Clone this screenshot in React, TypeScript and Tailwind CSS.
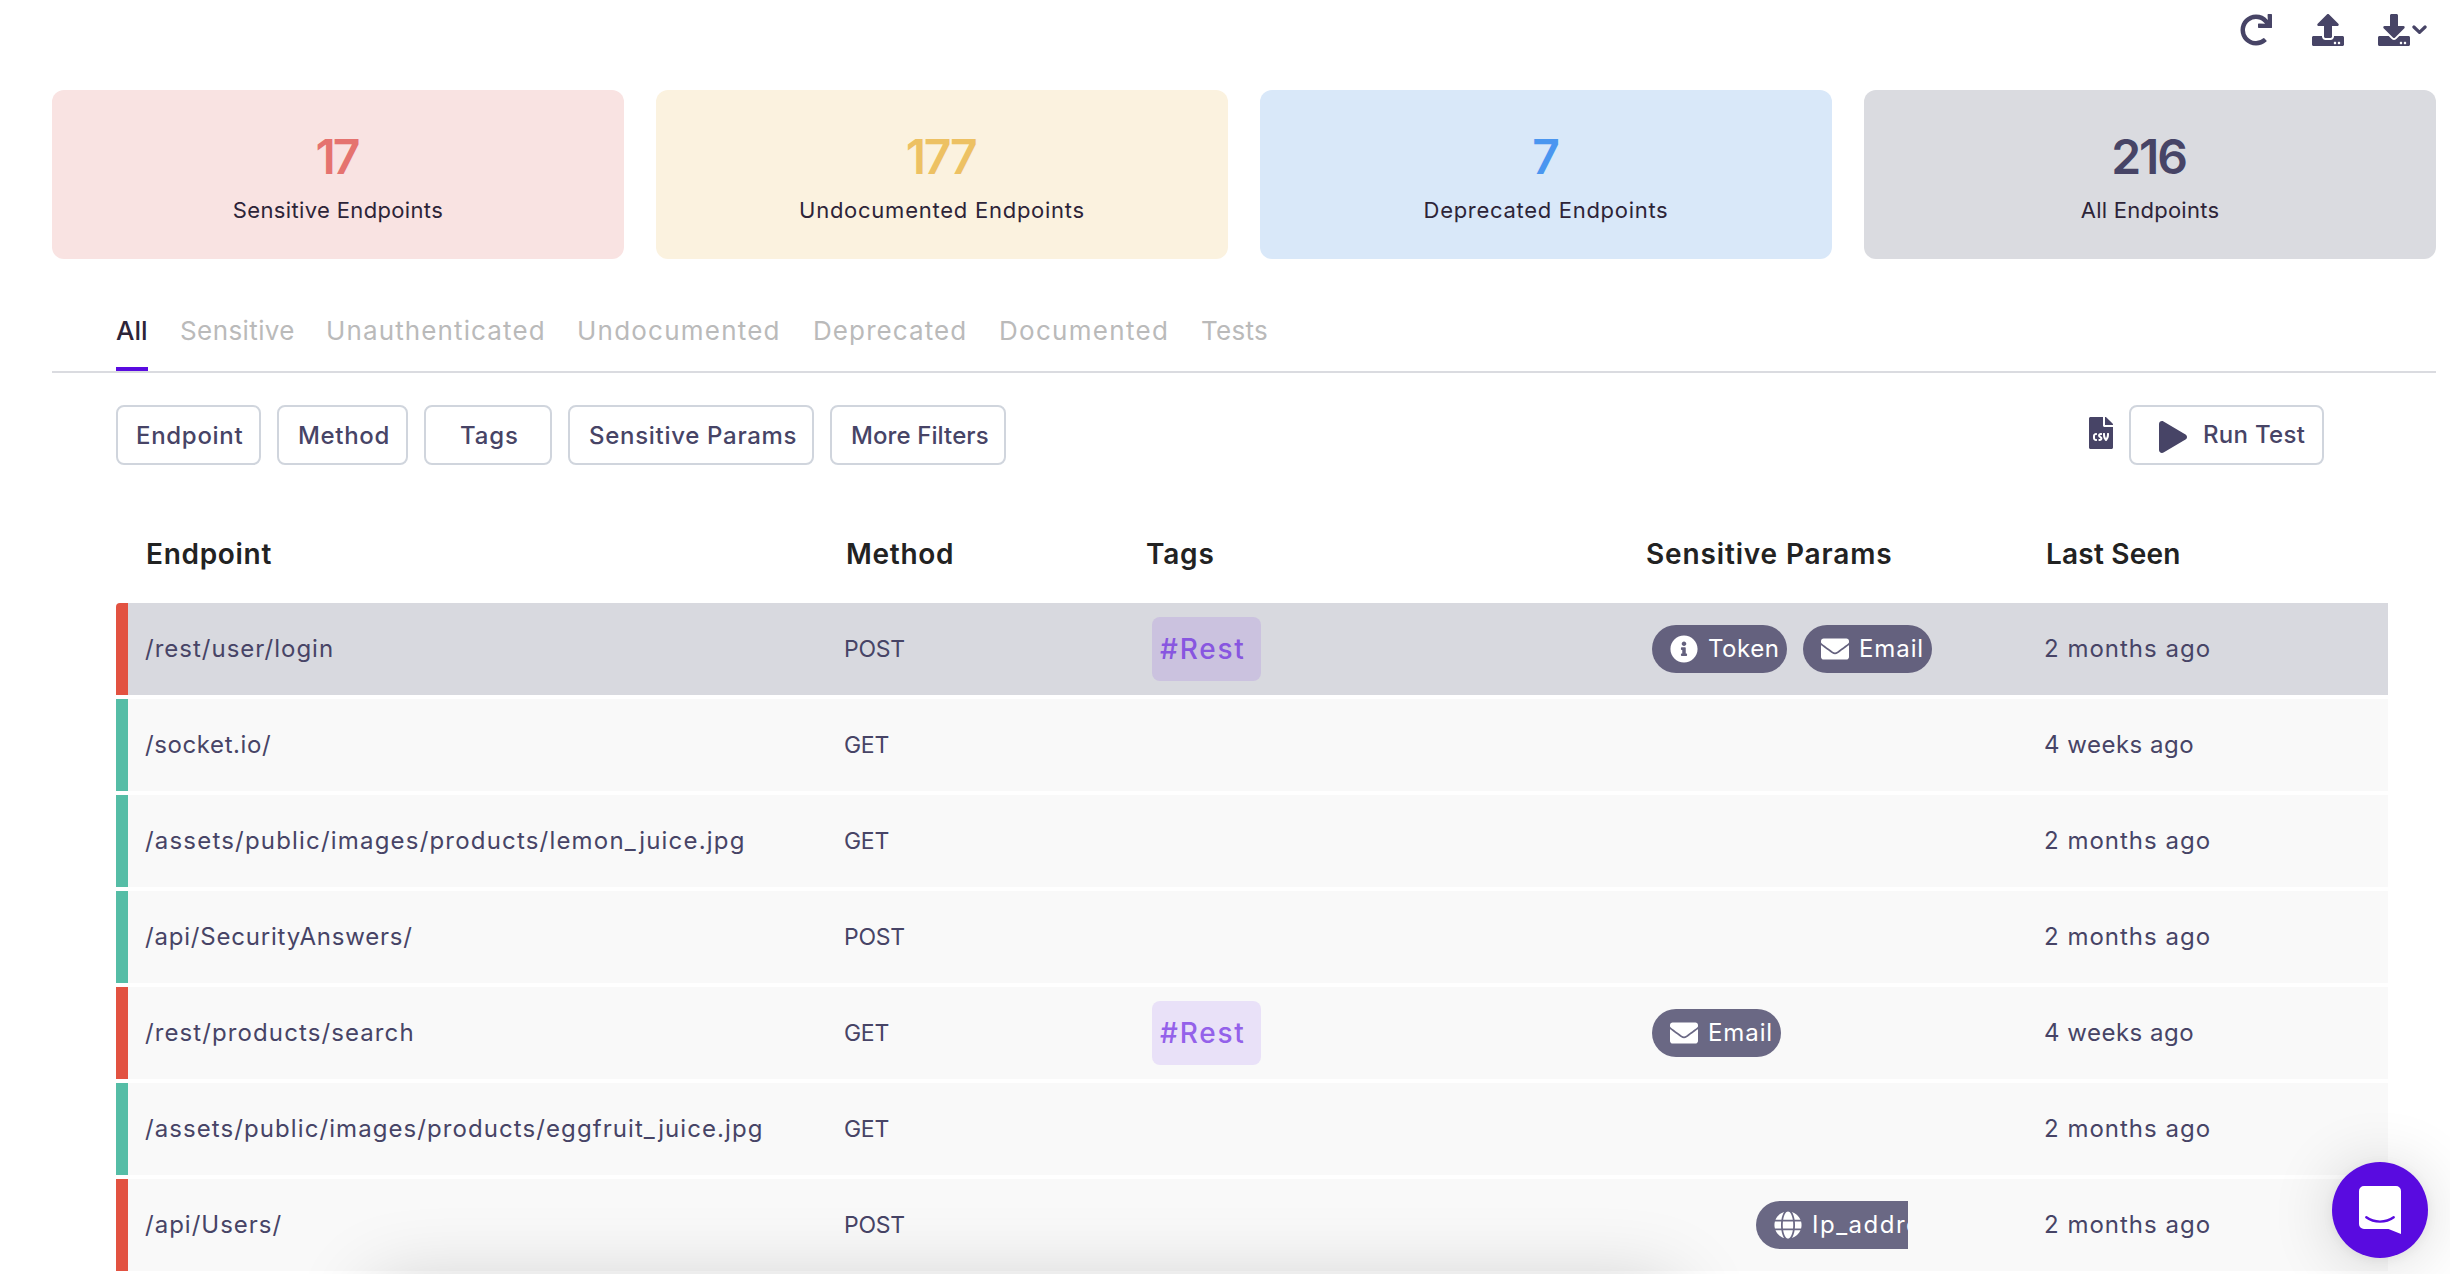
import React from 'react';
import {
  FaRedo,
  FaUpload,
  FaDownload,
  FaFileCsv,
  FaPlay,
  FaInfoCircle,
  FaEnvelope,
  FaGlobe,
} from 'react-icons/fa';

const cards = [
  { value: '17', label: 'Sensitive Endpoints', box: 'bg-[#f9e3e2]', num: 'mr-[3px] text-[#e5736f] tracking-[-3px]', text: 'tracking-[0.35px]' },
  { value: '177', label: 'Undocumented Endpoints', box: 'bg-[#fbf2df]', num: 'mr-[3px] text-[#edc163] tracking-[-2.4px]', text: 'tracking-[0.75px]' },
  { value: '7', label: 'Deprecated Endpoints', box: 'bg-[#d9e8f9]', num: 'text-[#4b96f0]', text: 'tracking-[0.7px]' },
  { value: '216', label: 'All Endpoints', box: 'bg-[#dadbe0]', num: 'mr-[3px] text-[#474466] tracking-[-2.1px]', text: 'tracking-[0.25px]' },
];

const tabs = [
  { label: 'Sensitive', style: 'w-[114px] tracking-[0.4px]' },
  { label: 'Unauthenticated', style: 'w-[219px] tracking-[1.12px]' },
  { label: 'Undocumented', style: 'w-[204px] tracking-[1.22px]' },
  { label: 'Deprecated', style: 'w-[154px] tracking-[1.1px]' },
  { label: 'Documented', style: 'w-[170px] tracking-[1.3px]' },
  { label: 'Tests', style: 'w-[68px] tracking-[0.3px]' },
];

const filters = [
  { label: 'Endpoint', style: 'w-[145px] pl-[18px] tracking-[0.7px]' },
  { label: 'Method', style: 'w-[131px] pl-[19px] tracking-[0.66px]' },
  { label: 'Tags', style: 'w-[128px] pl-[34px] tracking-[0.9px]' },
  { label: 'Sensitive Params', style: 'w-[246px] pl-[19px] tracking-[0.7px]' },
  { label: 'More Filters', style: 'w-[176px] pl-[19px] tracking-[0.1px]' },
];

type Param = 'Token' | 'Email' | 'Ip_address';

interface Row {
  path: string;
  track: string;
  method: 'GET' | 'POST';
  risky?: boolean;
  active?: boolean;
  rest?: boolean;
  params?: Param[];
  shifted?: boolean;
  seen: '2 months ago' | '4 weeks ago';
}

const rows: Row[] = [
  { path: '/rest/user/login', track: 'tracking-[1px]', method: 'POST', risky: true, active: true, rest: true, params: ['Token', 'Email'], seen: '2 months ago' },
  { path: '/socket.io/', track: 'tracking-[0.6px]', method: 'GET', seen: '4 weeks ago' },
  { path: '/assets/public/images/products/lemon_juice.jpg', track: 'tracking-[1.19px]', method: 'GET', seen: '2 months ago' },
  { path: '/api/SecurityAnswers/', track: 'tracking-[0.8px]', method: 'POST', seen: '2 months ago' },
  { path: '/rest/products/search', track: 'tracking-[1.1px]', method: 'GET', risky: true, rest: true, params: ['Email'], seen: '4 weeks ago' },
  { path: '/assets/public/images/products/eggfruit_juice.jpg', track: 'tracking-[1.08px]', method: 'GET', seen: '2 months ago' },
  { path: '/api/Users/', track: 'tracking-[1px]', method: 'POST', risky: true, params: ['Ip_address'], shifted: true, seen: '2 months ago' },
];

const pillStyle: Record<Param, string> = {
  Token: 'w-[135px] tracking-[0.5px]',
  Email: 'w-[129px] tracking-[0.9px]',
  Ip_address: 'w-[210px] tracking-[1.5px]',
};

function Pill({ kind, active }: { kind: Param; active?: boolean }) {
  const Icon = kind === 'Token' ? FaInfoCircle : kind === 'Email' ? FaEnvelope : FaGlobe;
  return (
    <span
      className={`flex h-12 shrink-0 items-center gap-[10px] rounded-full pl-[18px] text-[24px] whitespace-nowrap text-white ${active ? 'bg-[#64617e]' : 'bg-[#6a6884]'} ${pillStyle[kind]}`}
    >
      <Icon className="h-7 w-7 shrink-0" />
      {kind}
    </span>
  );
}

function TableRow({ row }: { row: Row }) {
  return (
    <div
      className={`grid h-[92px] grid-cols-[716px_308px_500px_392px_1fr] items-center border-l-12 text-[24px] text-[#474466] ${row.risky ? 'border-[#e25241]' : 'border-[#55bda6]'} ${row.active ? 'rounded-tl-[4px] bg-[#d8d9df]' : 'bg-[#f9f9f9]'}`}
    >
      <span className={`pl-[17px] whitespace-nowrap ${row.track}`}>{row.path}</span>
      <span className="text-[23px] tracking-[-0.3px]">{row.method}</span>
      <span className="flex">
        {row.rest && (
          <span
            className={`flex h-16 w-[109px] items-center rounded-lg pl-[8px] text-[28px] font-medium tracking-[1.8px] ${row.active ? 'bg-[#cbc2df] text-[#8856e0]' : 'bg-[#e9e1f8] text-[#9461ea]'}`}
          >
            #Rest
          </span>
        )}
      </span>
      <span className={`flex gap-4 overflow-hidden ${row.shifted ? 'pl-[104px]' : ''} ${row.active ? 'w-[290px]' : 'w-64'}`}>
        {row.params?.map((p) => <Pill key={p} kind={p} active={row.active} />)}
      </span>
      <span className={row.seen === '2 months ago' ? 'tracking-[1px]' : 'tracking-[0.5px]'}>{row.seen}</span>
    </div>
  );
}

export default function App() {
  return (
    <div className="relative h-[1274px] w-[2450px] overflow-hidden bg-white pr-[14px] pl-[52px] font-['Inter',sans-serif]">
      {/* Page actions */}
      <header className="flex h-[90px] items-start justify-end pt-[14px] pr-[9px] text-[#474466]">
        <FaRedo className="mr-10 size-8" />
        <FaUpload className="mr-[34px] size-8" />
        <FaDownload className="size-8" />
        <svg className="mt-[10px] ml-[2px] h-[12px] w-[15px]" viewBox="0 0 15 12" fill="none" stroke="currentColor" strokeWidth="3.2" strokeLinecap="round" strokeLinejoin="round">
          <path d="M1.9 3 7.5 8.4 13.1 3" />
        </svg>
      </header>

      {/* Summary cards */}
      <section className="grid grid-cols-4 gap-8">
        {cards.map((c) => (
          <div key={c.label} className={`flex h-[169px] flex-col items-center rounded-xl pt-[39px] ${c.box}`}>
            <span className={`text-[48px] leading-14 font-semibold ${c.num}`}>{c.value}</span>
            <span className={`mt-[9px] text-[22px] leading-8 text-[#2d2438] ${c.text}`}>{c.label}</span>
          </div>
        ))}
      </section>

      {/* Tabs */}
      <nav className="mt-[52px] flex gap-8 border-b-2 border-[#dadbe0] pl-16 text-[26px] leading-10">
        <span className="w-8 border-b-4 border-[#590be0] pb-4 font-medium text-[#2d2438]">All</span>
        {tabs.map((t) => (
          <span key={t.label} className={`whitespace-nowrap text-[#bababa] ${t.style}`}>{t.label}</span>
        ))}
      </nav>

      {/* Filters and actions */}
      <div className="mt-8 flex h-[60px] items-center gap-4 pr-28 pl-16 text-[24px] font-medium text-[#474466]">
        {filters.map((f) => (
          <button key={f.label} className={`h-full rounded-lg border-2 border-[#d0d5dd] pt-[2px] text-left whitespace-nowrap ${f.style}`}>
            {f.label}
          </button>
        ))}
        <FaFileCsv className="mb-1 ml-auto h-8 w-6" />
        <button className="flex h-full w-[195px] items-center rounded-lg border-2 border-[#d0d5dd] pl-[28px] tracking-[0.3px] whitespace-nowrap">
          <FaPlay className="mt-1 mr-4 h-8 w-7" />
          Run Test
        </button>
      </div>

      {/* Endpoint table */}
      <div className="mt-[68px] mr-12 ml-16">
        <div className="mb-[34px] grid h-9 grid-cols-[716px_308px_500px_392px_1fr] items-center pl-[14px] text-[28px] font-semibold text-[#222222]">
          <span className="pl-[16px] tracking-[0.7px]">Endpoint</span>
          <span className="tracking-[0.7px]">Method</span>
          <span className="-ml-[8px] tracking-[0.8px]">Tags</span>
          <span className="-ml-[8px] tracking-[0.86px] whitespace-nowrap">Sensitive Params</span>
          <span className="tracking-[0.2px]">Last Seen</span>
        </div>
        <div className="flex flex-col gap-1">
          {rows.map((r) => (
            <TableRow key={r.path} row={r} />
          ))}
        </div>
      </div>

      {/* Shadow of the drawer docked below the fold */}
      <div className="absolute top-[1285px] left-[372px] h-40 w-[1304px] rounded-xl shadow-[0_0_80px_rgba(0,0,0,0.19)]" />

      {/* Chat launcher */}
      <button className="absolute right-[22px] bottom-4 flex size-24 items-start justify-center rounded-full bg-[#590be0] pt-6 shadow-[0_2px_12px_rgba(0,0,0,0.06),0_4px_64px_rgba(0,0,0,0.16)]">
        <svg className="h-12 w-[42px]" viewBox="0 0 42 48">
          <path fill="#fff" d="M5 0h32a5 5 0 0 1 5 5v43L29.5 43H5a5 5 0 0 1-5-5V5a5 5 0 0 1 5-5Z" />
          <path fill="none" stroke="#590be0" strokeWidth="2.4" strokeLinecap="round" d="M7.3 31.3c7.8 5.8 19.6 5.8 27.4 0" />
        </svg>
      </button>
    </div>
  );
}
